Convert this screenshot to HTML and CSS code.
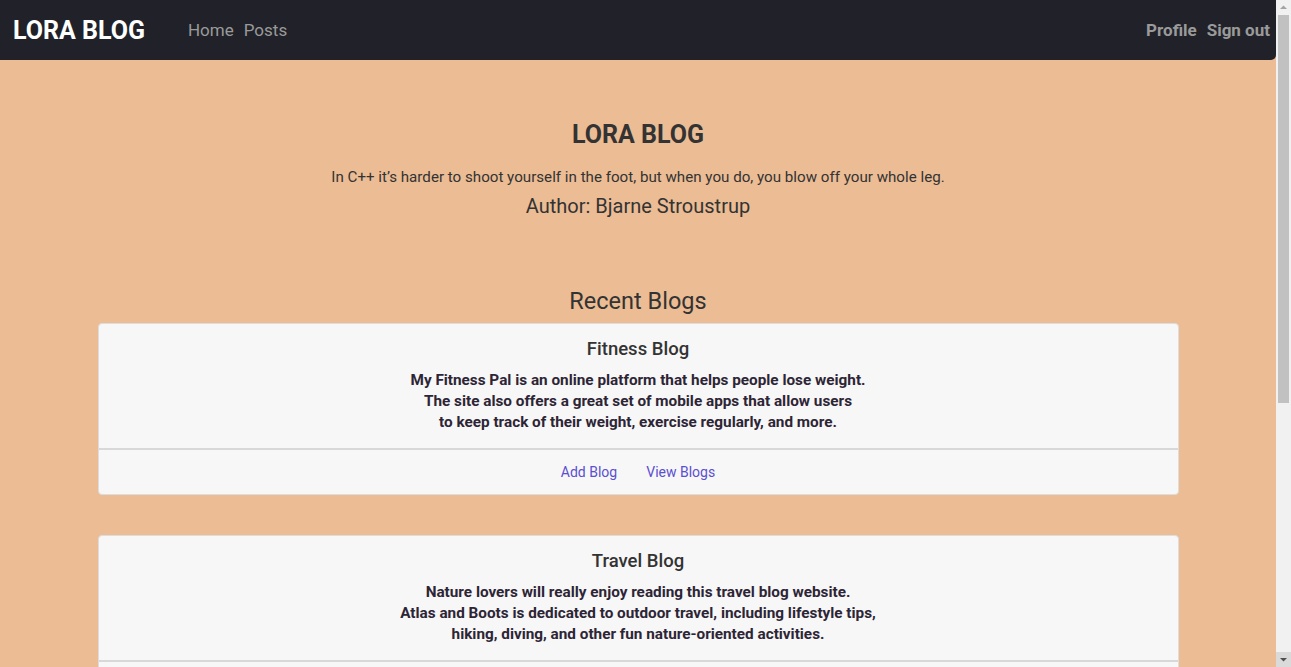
FILE: index.html
```html
<!DOCTYPE html>
<html>
<head>
<meta charset="utf-8">
<link rel="stylesheet" href="styles.css">
</head>
<body>
<div class="page">
  <nav class="navbar">
    <a class="brand" href="#">LORA BLOG</a>
    <div class="nav-left">
      <a href="#">Home</a>
      <a href="#">Posts</a>
    </div>
    <div class="nav-right">
      <a href="#">Profile</a>
      <a href="#">Sign out</a>
    </div>
  </nav>
  <main class="main">
    <section class="hero">
      <h1>LORA BLOG</h1>
      <p class="quote">In C++ it’s harder to shoot yourself in the foot, but when you do, you blow off your whole leg.</p>
      <p class="author">Author: Bjarne Stroustrup</p>
    </section>
    <section class="recent">
      <h2>Recent Blogs</h2>
      <div class="card">
        <div class="card-body">
          <h3>Fitness Blog</h3>
          <p>My Fitness Pal is an online platform that helps people lose weight.<br>The site also offers a great set of mobile apps that allow users<br>to keep track of their weight, exercise regularly, and more.</p>
        </div>
        <div class="card-footer">
          <a href="#">Add Blog</a>
          <a href="#">View Blogs</a>
        </div>
      </div>
      <div class="card">
        <div class="card-body">
          <h3>Travel Blog</h3>
          <p>Nature lovers will really enjoy reading this travel blog website.<br>Atlas and Boots is dedicated to outdoor travel, including lifestyle tips,<br>hiking, diving, and other fun nature-oriented activities.</p>
        </div>
        <div class="card-footer">
          <a href="#">Add Blog</a>
          <a href="#">View Blogs</a>
        </div>
      </div>
    </section>
  </main>
</div>
<div class="scrollbar" aria-hidden="true">
  <div class="sb-btn sb-up"><svg width="15" height="15" viewBox="0 0 15 15"><path d="M4 9 L7.5 5.5 L11 9 Z" fill="#a3a3a3"/></svg></div>
  <div class="sb-track"><div class="sb-thumb"></div></div>
  <div class="sb-btn sb-down"><svg width="15" height="15" viewBox="0 0 15 15"><path d="M4 6 L7.5 9.5 L11 6 Z" fill="#505050"/></svg></div>
</div>
</body>
</html>
```

FILE: styles.css
```css
* { box-sizing: border-box; }
html, body {
  margin: 0;
  padding: 0;
}
body {
  background: #ecbc94;
  font-family: Roboto, "Liberation Sans", Arial, sans-serif;
  color: #333;
}
a { text-decoration: none; }

.page {
  width: calc(100% - 15px);
}

/* fake browser scrollbar overlay */
.scrollbar {
  position: fixed;
  top: 0;
  right: 0;
  width: 15px;
  height: 100vh;
  background: #f1f1f1;
  display: flex;
  flex-direction: column;
}
.sb-btn {
  height: 15px;
  flex: none;
}
.sb-btn svg { display: block; }
.sb-down { background: #dadada; }
.sb-track {
  flex: 1;
  padding: 0 2px;
}
.sb-thumb {
  height: 388px;
  background: #c1c1c1;
}

.navbar {
  height: 60px;
  background: #212229;
  display: flex;
  align-items: center;
  padding: 0 6px 0 13px;
  border-bottom-right-radius: 5px;
}
.brand {
  color: #fff;
  font-size: 25px;
  font-weight: 700;
  margin-right: 43px;
}
.nav-left, .nav-right {
  display: flex;
  gap: 10px;
}
.nav-left a {
  color: #9a9a9a;
  font-size: 17px;
}
.nav-right {
  margin-left: auto;
}
.nav-right a {
  color: #9a9a9a;
  font-size: 17px;
  font-weight: 700;
}

.main {
  padding-bottom: 60px;
}
.hero {
  text-align: center;
  padding-top: 60px;
}
.hero h1 {
  margin: 0;
  font-size: 25px;
  font-weight: 700;
  line-height: 30px;
}
.quote {
  margin: 18px 0 0;
  font-size: 15.15px;
  line-height: 18px;
}
.author {
  margin: 8px 0 0;
  font-size: 20px;
  line-height: 24px;
}
.recent {
  width: 1081px;
  margin: 68px auto 0;
}
.recent h2 {
  margin: 0 0 7px;
  text-align: center;
  font-size: 23.5px;
  font-weight: 400;
  line-height: 30px;
}
.card {
  background: #f7f7f7;
  border: 1px solid #ddd;
  border-radius: 4px;
  margin-bottom: 40px;
}
.card-body {
  text-align: center;
  padding: 13px 20px 15px;
}
.card-body h3 {
  margin: 0 0 9px;
  font-size: 18.5px;
  font-weight: 500;
  line-height: 24px;
}
.card-body p {
  margin: 0;
  font-size: 15.3px;
  font-weight: 700;
  line-height: 21px;
  color: #2d2535;
}
.card-footer {
  border-top: 2px solid #d8d8d8;
  display: flex;
  justify-content: center;
  gap: 29px;
  padding: 13px 0 13px;
}
.card-footer a {
  color: #5a4fd0;
  font-size: 14px;
  line-height: 18px;
}
```
